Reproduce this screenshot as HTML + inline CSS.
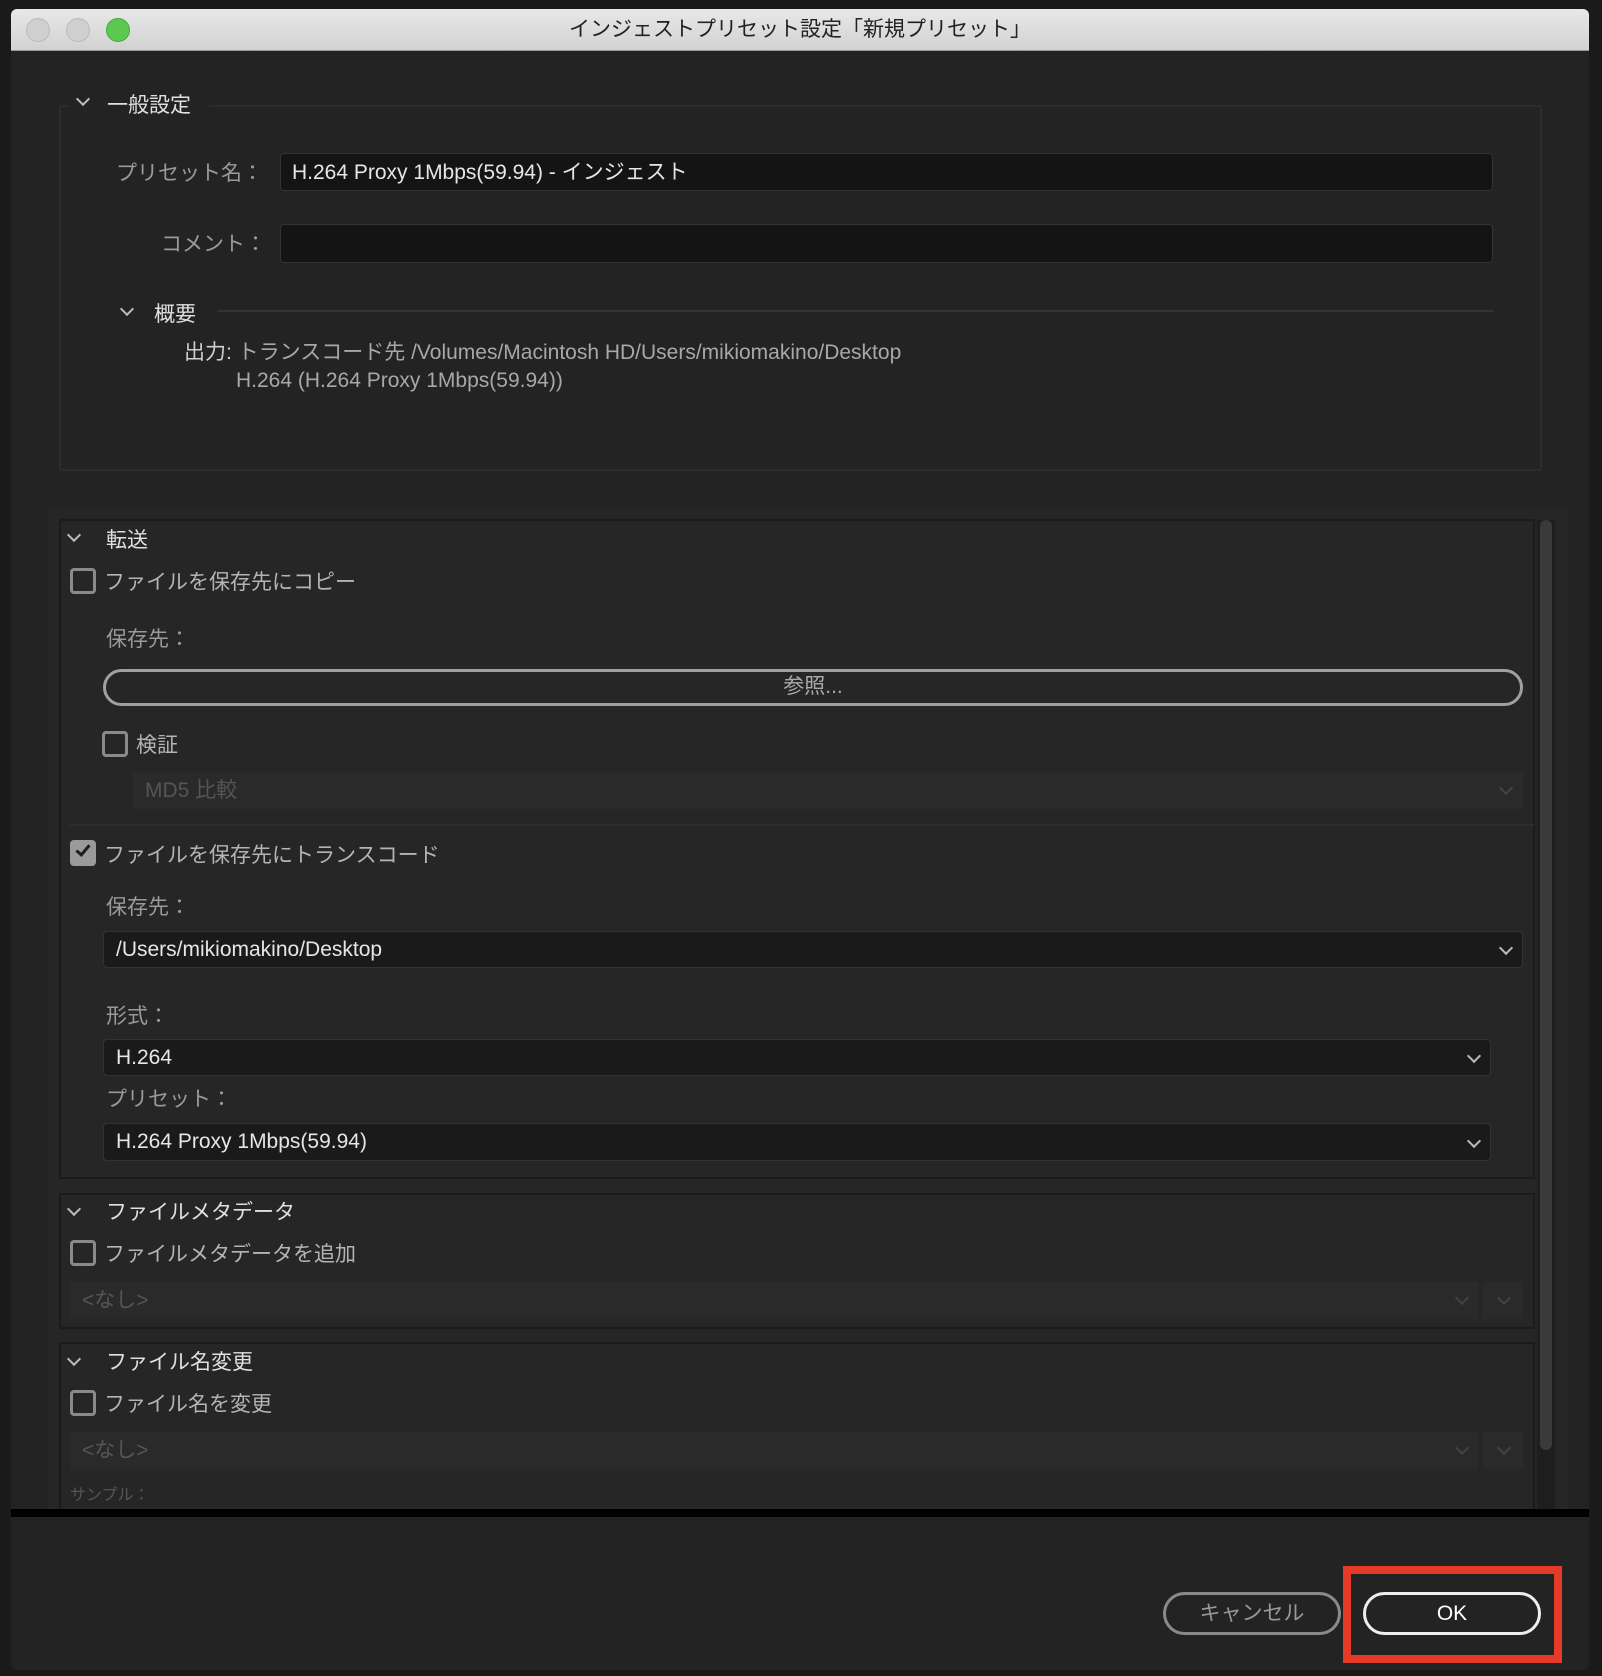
<!DOCTYPE html>
<html><head><meta charset="utf-8"><style>
*{box-sizing:border-box;margin:0;padding:0}
body{width:1602px;height:1676px;background:#1a1a1a;position:relative;overflow:hidden;font-family:"Liberation Sans","Noto Sans CJK JP",sans-serif;font-size:21px;color:#b4b4b4}
.a{position:absolute;white-space:nowrap}
.dlg{position:absolute;left:11px;top:9px;width:1578px;height:1661px;background:#232323;border-radius:6px;overflow:hidden}
.tb{position:absolute;left:0;top:0;width:100%;height:42px;background:linear-gradient(#e8e8e8,#d2d2d2);border-bottom:1px solid #999;text-align:center;font-size:21px;color:#222;line-height:42px}
.dot{position:absolute;top:9px;width:24px;height:24px;border-radius:50%;background:#cfcfcf;border:1px solid #bbb}
.box{position:absolute;border:2px solid #2c2c2c;border-radius:3px}
.inp{position:absolute;background:#141414;border:1px solid #333;border-radius:4px;color:#e6e6e6;padding-left:11px}
.sec{position:absolute;left:59px;width:1476px;background:#262626;border:2px solid #1b1b1b}
.cb{position:absolute;width:26px;height:26px;border:3px solid #8a8a8a;border-radius:4px}
.dd{position:absolute;background:#1a1a1a;border:1px solid #333;border-radius:4px;color:#e6e6e6;padding-left:12px;line-height:35px}
.dis{position:absolute;background:#2a2a2a;color:#555;padding-left:12px;line-height:37px}
.chev{position:absolute;width:10px;height:10px;border-right:2px solid #bbb;border-bottom:2px solid #bbb;transform:rotate(45deg)}
.btn{position:absolute;border:3px solid #9a9a9a;border-radius:22px;text-align:center}
</style></head><body>
<div class="dlg">
 <div class="tb">インジェストプリセット設定「新規プリセット」
  <div class="dot" style="left:15px"></div><div class="dot" style="left:55px"></div><div class="dot" style="left:95px;background:#5bc84f;border-color:#4aa83f"></div>
 </div>
 <div class="box" style="left:48px;top:96px;width:1483px;height:366px"></div>
 <div class="a" style="left:58px;top:82px;width:140px;height:30px;background:#232323"></div>
 <div class="chev" style="left:67px;top:85px"></div>
 <div class="a" style="left:96px;top:80px;color:#e0e0e0">一般設定</div>
 <div class="a" style="left:105px;top:148px;color:#9a9a9a">プリセット名：</div>
 <div class="inp" style="left:269px;top:144px;width:1213px;height:38px;line-height:38px">H.264 Proxy 1Mbps(59.94) - インジェスト</div>
 <div class="a" style="left:150px;top:219px;color:#9a9a9a">コメント：</div>
 <div class="inp" style="left:269px;top:215px;width:1213px;height:39px"></div>
 <div class="chev" style="left:111px;top:295px"></div>
 <div class="a" style="left:143px;top:289px;color:#e0e0e0">概要</div>
 <div class="a" style="left:206px;top:301px;width:1276px;height:2px;background:#333"></div>
 <div class="a" style="left:173px;top:327px;color:#d0d0d0">出力: <span style="color:#a8a8a8">トランスコード先 /Volumes/Macintosh HD/Users/mikiomakino/Desktop</span></div>
 <div class="a" style="left:225px;top:360px;color:#a8a8a8">H.264 (H.264 Proxy 1Mbps(59.94))</div>

 <div class="a" style="left:37px;top:498px;width:1520px;height:1002px;background:#262626"></div>
 <div class="a" style="left:1526px;top:511px;width:18px;height:990px;background:#1e1e1e"></div>
 <div class="a" style="left:1529px;top:511px;width:12px;height:930px;background:#3a3a3a;border-radius:6px"></div>

 <div class="sec" style="left:48px;top:510px;height:660px"></div>
 <div class="chev" style="left:58px;top:521px"></div>
 <div class="a" style="left:95px;top:515px;color:#e0e0e0">転送</div>
 <div class="cb" style="left:59px;top:559px"></div>
 <div class="a" style="left:93px;top:557px">ファイルを保存先にコピー</div>
 <div class="a" style="left:95px;top:614px;color:#9a9a9a">保存先：</div>
 <div class="btn" style="left:92px;top:660px;width:1420px;height:37px;line-height:30px;color:#aaa;border-color:#a0a0a0">参照...</div>
 <div class="cb" style="left:91px;top:722px"></div>
 <div class="a" style="left:125px;top:720px">検証</div>
 <div class="dis" style="left:122px;top:763px;width:1390px;height:37px">MD5 比較</div>
 <div class="chev" style="left:1490px;top:774px;border-color:#444"></div>
 <div class="a" style="left:59px;top:815px;width:1464px;height:2px;background:#2e2e2e"></div>
 <div class="cb" style="left:59px;top:831px;background:#9a9a9a;border-color:#9a9a9a"></div>
 <div class="a" style="top:833px;width:8px;height:14px;border-right:3px solid #1e1e1e;border-bottom:3px solid #1e1e1e;transform:rotate(40deg);left:68px"></div>
 <div class="a" style="left:93px;top:830px">ファイルを保存先にトランスコード</div>
 <div class="a" style="left:95px;top:882px;color:#9a9a9a">保存先：</div>
 <div class="dd" style="left:92px;top:922px;width:1420px;height:37px">/Users/mikiomakino/Desktop</div>
 <div class="chev" style="left:1490px;top:934px"></div>
 <div class="a" style="left:95px;top:991px;color:#9a9a9a">形式：</div>
 <div class="dd" style="left:92px;top:1030px;width:1388px;height:37px">H.264</div>
 <div class="chev" style="left:1458px;top:1042px"></div>
 <div class="a" style="left:95px;top:1074px;color:#9a9a9a">プリセット：</div>
 <div class="dd" style="left:92px;top:1114px;width:1388px;height:38px">H.264 Proxy 1Mbps(59.94)</div>
 <div class="chev" style="left:1458px;top:1127px"></div>

 <div class="sec" style="left:48px;top:1184px;height:136px"></div>
 <div class="chev" style="left:58px;top:1195px"></div>
 <div class="a" style="left:95px;top:1187px;color:#e0e0e0">ファイルメタデータ</div>
 <div class="cb" style="left:59px;top:1231px"></div>
 <div class="a" style="left:93px;top:1229px">ファイルメタデータを追加</div>
 <div class="dis" style="left:59px;top:1273px;width:1408px;height:37px">&lt;なし&gt;</div>
 <div class="dis" style="left:1472px;top:1273px;width:40px;height:37px"></div>
 <div class="chev" style="left:1446px;top:1284px;border-color:#444"></div>
 <div class="chev" style="left:1488px;top:1284px;border-color:#444"></div>

 <div class="sec" style="left:48px;top:1333px;height:170px"></div>
 <div class="chev" style="left:58px;top:1345px"></div>
 <div class="a" style="left:95px;top:1337px;color:#e0e0e0">ファイル名変更</div>
 <div class="cb" style="left:59px;top:1381px"></div>
 <div class="a" style="left:93px;top:1379px">ファイル名を変更</div>
 <div class="dis" style="left:59px;top:1423px;width:1408px;height:37px">&lt;なし&gt;</div>
 <div class="dis" style="left:1472px;top:1423px;width:40px;height:37px"></div>
 <div class="chev" style="left:1446px;top:1434px;border-color:#444"></div>
 <div class="chev" style="left:1488px;top:1434px;border-color:#444"></div>
 <div class="a" style="left:59px;top:1472px;font-size:16px;color:#555">サンプル：</div>

 <div class="a" style="left:0;top:1500px;width:100%;height:8px;background:#000"></div>
 <div class="btn" style="left:1152px;top:1583px;width:178px;height:43px;line-height:37px;color:#999;border-color:#8a8a8a">キャンセル</div>
 <div class="btn" style="left:1352px;top:1583px;width:178px;height:43px;line-height:37px;color:#fff;border-color:#eee">OK</div>
 <div class="a" style="left:1332px;top:1557px;width:219px;height:97px;border:8px solid #e63a28"></div>
</div>
</body></html>
